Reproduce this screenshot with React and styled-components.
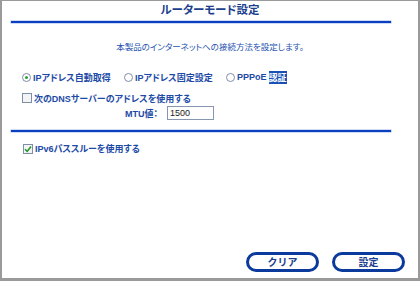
import React from 'react'
import styled, { createGlobalStyle } from 'styled-components'

const GlobalStyle = createGlobalStyle`
  html, body { margin: 0; padding: 0; background: #fff; }
  body {
    font-family: "Liberation Sans", "Noto Sans CJK JP", sans-serif;
    font-feature-settings: "palt";
  }
`

const Frame = styled.div`
  box-sizing: border-box;
  width: 420px;
  height: 281px;
  border: 2px solid #9a9a9a;
  border-top-width: 1px;
  border-bottom-width: 3px;
  display: flex;
  flex-direction: column;
`

const Title = styled.h1`
  margin: 0;
  height: 20px;
  line-height: 18px;
  text-align: center;
  font-size: 11.5px;
  font-weight: 700;
  color: #1c3f8e;
`

const Rule = styled.div`
  margin-left: 9px;
  margin-top: ${p => p.mt || 0}px;
  width: 380px;
  height: 2px;
  background: #0a3fbf;
  box-shadow: 0 0 0 0.5px #9fb6ea;
`

const Desc = styled.p`
  margin: 17px 0 0;
  height: 14px;
  line-height: 14px;
  text-align: center;
  font-size: 8.5px;
  color: #2552b0;
`

const Options = styled.div`
  padding: 15px 0 0 20px;
  display: flex;
  flex-direction: column;
`

const Row = styled.div`
  display: flex;
  align-items: center;
  height: ${p => p.h || 16}px;
  margin-bottom: ${p => p.mb || 0}px;
`

const Choice = styled.label`
  display: flex;
  align-items: center;
  gap: 2px;
  width: ${p => p.w || 'auto'};
  font-size: 9px;
  font-weight: 700;
  color: #1d4aa6;
  white-space: nowrap;
`

const Radio = styled.span`
  box-sizing: border-box;
  flex-shrink: 0;
  width: 9px;
  height: 9px;
  border-radius: 50%;
  border: 1px solid #7f8ea8;
  background: #fff;
  display: flex;
  align-items: center;
  justify-content: center;
  &::after {
    content: '';
    width: 3px;
    height: 3px;
    border-radius: 50%;
    background: ${p => (p.checked ? '#22a52e' : 'transparent')};
  }
`

const Check = styled.span`
  box-sizing: border-box;
  flex-shrink: 0;
  width: 10px;
  height: 10px;
  border: 1px solid #7f8ea8;
  background: #f4f4f4;
  display: flex;
  align-items: center;
  justify-content: center;
`

const Selected = styled.span`
  background: #1a4fb8;
  color: #fff;
`

const MtuRow = styled.div`
  display: flex;
  align-items: center;
  padding-left: 103px;
  height: 16px;
`

const MtuLabel = styled.span`
  flex-shrink: 0;
  font-size: 9px;
  font-weight: 700;
  color: #1d4aa6;
  width: 42px;
`

const MtuInput = styled.input`
  box-sizing: border-box;
  flex-shrink: 0;
  width: 47px;
  height: 14px;
  margin: 0;
  border: 1px solid #8796b0;
  padding: 0 2px;
  font-family: "Liberation Sans", sans-serif;
  font-size: 9px;
  color: #222;
  outline: none;
`

const Ipv6 = styled.div`
  padding: 10px 0 0 21px;
`

const Spacer = styled.div`
  flex: 1;
`

const Buttons = styled.div`
  display: flex;
  justify-content: flex-end;
  gap: 13px;
  padding: 0 13px 6px 0;
`

const Button = styled.button`
  box-sizing: border-box;
  width: 73px;
  height: 20px;
  border: 3px solid #0a3a9c;
  border-radius: 10px;
  background: #fff;
  font-family: "Liberation Sans", "Noto Sans CJK JP", sans-serif;
  font-size: 10px;
  font-weight: 700;
  color: #1c3f8e;
  padding: 0;
  line-height: 13px;
`

const Tick = () => (
  <svg width="8" height="8" viewBox="0 0 8 8">
    <path d="M1 4.2 L3.2 6.4 L7 1.6" fill="none" stroke="#1f9a2a" strokeWidth="1.6" />
  </svg>
)

export default function App() {
  return (
    <Frame>
      <GlobalStyle />
      <Title>ルーターモード設定</Title>
      <Rule />
      <Desc>本製品のインターネットへの接続方法を設定します。</Desc>
      <Options>
        <Row mb={6}>
          <Choice w="102px"><Radio checked />IPアドレス自動取得</Choice>
          <Choice w="102px"><Radio />IPアドレス固定設定</Choice>
          <Choice><Radio />PPPoE<Selected>認証</Selected></Choice>
        </Row>
        <Row h={14}>
          <Choice><Check />次のDNSサーバーのアドレスを使用する</Choice>
        </Row>
        <MtuRow>
          <MtuLabel>MTU値：</MtuLabel>
          <MtuInput defaultValue="1500" />
        </MtuRow>
      </Options>
      <Rule mt={9} />
      <Ipv6>
        <Choice><Check><Tick /></Check>IPv6パススルーを使用する</Choice>
      </Ipv6>
      <Spacer />
      <Buttons>
        <Button>クリア</Button>
        <Button>設定</Button>
      </Buttons>
    </Frame>
  )
}
